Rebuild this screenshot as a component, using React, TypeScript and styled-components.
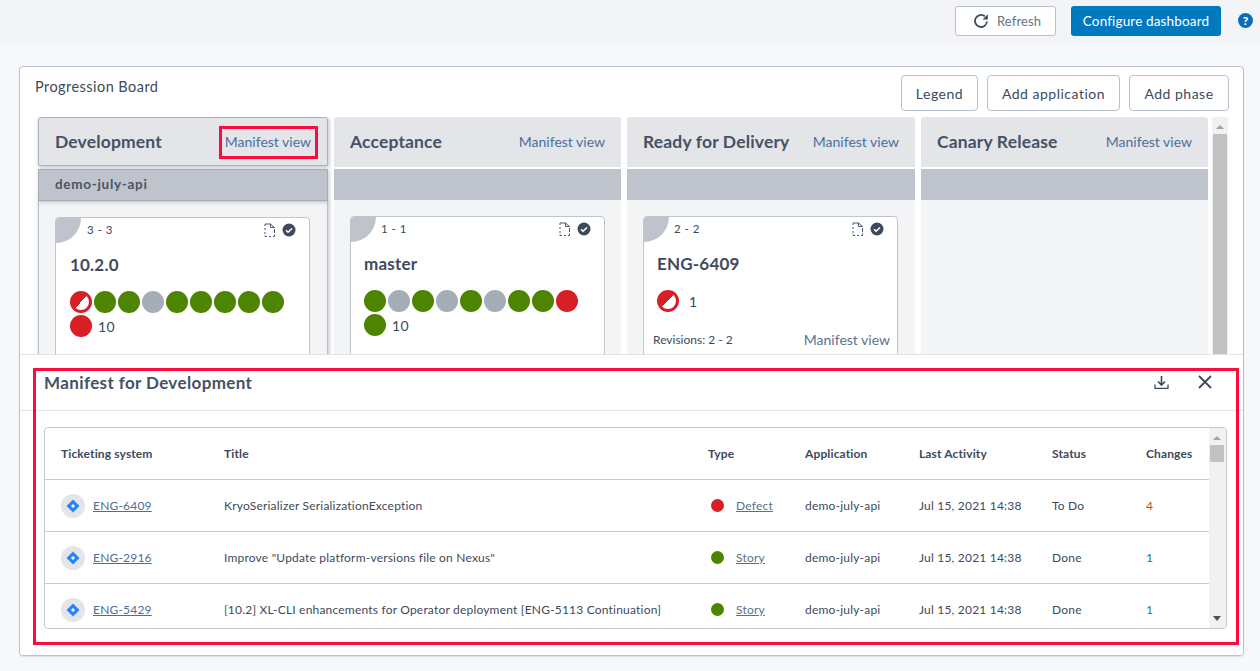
import React from "react";
import styled, { createGlobalStyle } from "styled-components";

const Global = createGlobalStyle`
  html, body { margin: 0; padding: 0; height: 100%; }
  body { background: #f7f8fa; font-family: Lato, "Liberation Sans", sans-serif; color: #3d4a5c; overflow: hidden; }
  * { box-sizing: border-box; }
`;

const Page = styled.div`
  position: relative;
  width: 1260px;
  height: 671px;
  overflow: hidden;
`;
const TopBar = styled.header`
  height: 45px;
  background: #f3f4f8;
  display: flex;
  justify-content: flex-end;
  align-items: flex-start;
  padding: 6px 7px 0 0;
`;
const RefreshButton = styled.button`
  width: 101px;
  height: 30px;
  background: #fff;
  border: 1px solid #b8c0ca;
  border-radius: 3px;
  display: flex;
  align-items: center;
  justify-content: flex-start;
  gap: 8px;
  color: #667385;
  font: 400 13px Lato, sans-serif;
  letter-spacing: 0.1px;
  padding: 0 0 0 17px;
`;
const PrimaryButton = styled.button`
  width: 150px;
  height: 30px;
  margin-left: 15px;
  background: #0079bf;
  border: 0;
  border-radius: 3px;
  color: #fff;
  font: 400 13.5px Lato, sans-serif;
  letter-spacing: 0.15px;
  padding: 0;
`;
const HelpDot = styled.span`
  width: 15px;
  height: 15px;
  margin: 7px 0 0 17px;
  border-radius: 50%;
  background: #0b6db7;
  color: #fff;
  font: 900 12px/15px Lato, sans-serif;
  text-align: center;
`;
const Main = styled.main`
  padding: 21px 16px 0 19px;
`;
const Card = styled.section`
  height: 590px;
  background: #fff;
  border: 1px solid #b8c2cd;
  border-radius: 4px;
  box-shadow: 0 1px 1px rgba(60, 70, 90, 0.12);
  overflow: hidden;
  display: flex;
  flex-direction: column;
`;
const CardHead = styled.div`
  height: 50px;
  display: flex;
  justify-content: space-between;
  align-items: flex-start;
  padding: 8px 14px 0 15px;
`;
const CardTitle = styled.h2`
  margin: 3px 0 0;
  font: 400 14.5px/18px Lato, sans-serif;
  letter-spacing: 0.45px;
  color: #3d4a5c;
`;
const Actions = styled.div`
  display: flex;
  gap: 9px;
`;
const OutlineButton = styled.button<{ $w: number }>`
  width: ${(p) => p.$w}px;
  height: 36px;
  background: #fff;
  border: 1px solid #b8c0ca;
  border-radius: 4px;
  font: 400 14px Lato, sans-serif;
  letter-spacing: 0.5px;
  color: #3d4a5c;
  padding: 0;
`;
const Board = styled.div`
  height: 237px;
  display: flex;
  padding-left: 18px;
  overflow: hidden;
`;
const Columns = styled.div`
  display: grid;
  grid-template-columns: 290px 287px 288px 287px;
  column-gap: 6px;
`;
const Column = styled.div`
  display: flex;
  flex-direction: column;
  min-width: 0;
`;
const ColumnHead = styled.div<{ $active?: boolean }>`
  height: ${(p) => (p.$active ? 49 : 50)}px;
  display: flex;
  align-items: center;
  justify-content: space-between;
  padding: 0 16px ${(p) => (p.$active ? 0 : 1)}px;
  background: #e3e5e9;
  border-radius: 3px 3px 0 0;
  ${(p) => p.$active && `border: 1px solid #a9b2bf; box-shadow: 1px 1px 4px rgba(60,70,90,.35);`}
`;
const PhaseName = styled.span`
  font: 700 17.5px Lato, sans-serif;
  letter-spacing: 0.15px;
  color: #465264;
`;
const ManifestLink = styled.span`
  font: 400 14px Lato, sans-serif;
  color: #4d6f9c;
`;
const Band = styled.div<{ $active?: boolean }>`
  height: ${(p) => (p.$active ? 32 : 31)}px;
  margin-top: ${(p) => (p.$active ? 3 : 2)}px;
  margin-bottom: ${(p) => (p.$active ? -1 : 0)}px;
  background: #bfc4cc;
  display: flex;
  align-items: center;
  padding: 0 0 2px 16px;
  font: 700 13.5px Lato, sans-serif;
  letter-spacing: 0.7px;
  color: #4a5565;
  ${(p) => p.$active && `border: 1px solid #a4acb8; box-shadow: 1px 1px 4px rgba(60,70,90,.3); position: relative;`}
`;
const ColumnBody = styled.div<{ $active?: boolean }>`
  flex: 1;
  background: #f3f4f6;
  padding: ${(p) => (p.$active ? "17px 16px 0" : "16px 16px 0")};
  ${(p) => p.$active && `border: 1px solid #b8c0ca; border-width: 0 1px; box-shadow: 1px 1px 4px rgba(60,70,90,.35);`}
`;
const Release = styled.article<{ $inset?: number }>`
  position: relative;
  width: 255px;
  height: 190px;
  background: #fff;
  border: 1px solid #bfc5cd;
  border-radius: 4px;
  padding: 0 13px 0 ${(p) => p.$inset ?? 13}px;
  overflow: hidden;
`;
const Corner = styled.span`
  position: absolute;
  top: 0;
  left: 0;
  width: 25px;
  height: 25px;
  background: #bfc4cc;
  border-radius: 0 0 25px 0;
`;
const ReleaseTop = styled.div`
  height: 23px;
  display: flex;
  align-items: center;
  padding-left: 17px;
  font: 400 11.5px Lato, sans-serif;
  letter-spacing: 0.5px;
  color: #3d4a5c;
`;
const Range = styled.span`
  flex: 1;
  margin-top: -1px;
`;
const TopIcons = styled.div`
  display: flex;
  align-items: center;
  gap: 7px;
`;
const ReleaseTitle = styled.h3`
  margin: 12px 0 0;
  font: 700 17px/24px Lato, sans-serif;
  letter-spacing: 0.2px;
  color: #3f4b5c;
`;
const Dots = styled.div`
  display: flex;
  flex-wrap: wrap;
  gap: 2px;
  align-items: center;
  margin-top: 14px;
  width: 226px;
`;
const Dot = styled.span<{ $c: string }>`
  width: 22px;
  height: 22px;
  border-radius: 50%;
  background: ${(p) => p.$c};
`;
const HalfDot = styled.span`
  width: 22px;
  height: 22px;
  border-radius: 50%;
  border: 3px solid #d91f26;
  background: linear-gradient(135deg, #d91f26 50%, #fff 50%);
`;
const Count = styled.span<{ $gap: number }>`
  margin-left: ${(p) => p.$gap}px;
  font: 400 14px Lato, sans-serif;
  letter-spacing: 0.3px;
  color: #3d4a5c;
`;
const Footer = styled.div`
  display: flex;
  justify-content: space-between;
  align-items: center;
  margin: 19px -6px 0 -4px;
`;
const Revisions = styled.span`
  font: 400 12px Lato, sans-serif;
  color: #3d4a5c;
`;
const FooterLink = styled.span`
  font: 400 14px Lato, sans-serif;
  color: #5a7191;
`;
const Scrollbar = styled.div`
  position: relative;
  width: 16px;
  margin-left: 4px;
  background: #f1f1f1;
`;
const Thumb = styled.div`
  position: absolute;
  left: 1px;
  right: 1px;
  top: ${(p: { $top: number }) => p.$top}px;
  bottom: 0;
  background: #c1c1c1;
`;
const ArrowUp = styled.span`
  position: absolute;
  top: 8px;
  left: 4px;
  border: 4px solid transparent;
  border-top: 0;
  border-bottom: 4px solid #a3a3a3;
`;
const ArrowDown = styled.span`
  position: absolute;
  bottom: 7px;
  left: 4px;
  border: 4px solid transparent;
  border-bottom: 0;
  border-top: 5px solid #505050;
`;
const Manifest = styled.div`
  flex: 1;
  display: flex;
  flex-direction: column;
  border-top: 1px solid #e1e3e7;
  background: #fff;
  position: relative;
`;
const ManifestHead = styled.div`
  height: 56px;
  display: flex;
  align-items: center;
  padding: 0 31px 0 24px;
  border-bottom: 1px solid #e3e5e8;
`;
const ManifestTitle = styled.h2`
  flex: 1;
  margin: -1px 0 0;
  font: 700 17px Lato, sans-serif;
  letter-spacing: 0.38px;
  color: #465264;
`;
const HeadIcons = styled.div`
  display: flex;
  align-items: center;
  gap: 29px;
  margin-top: -1px;
`;
const TableFrame = styled.div`
  position: relative;
  margin: 16px 16px 0 24px;
  height: 202px;
  border: 1px solid #c2c7ce;
  border-radius: 4px;
  overflow: hidden;
  padding-right: 17px;
`;
const TableScroll = styled.div`
  position: absolute;
  top: 0;
  right: 0;
  bottom: 0;
  width: 17px;
  background: #f1f1f1;
`;
const TableThumb = styled.div`
  position: absolute;
  top: 17px;
  left: 1px;
  width: 14px;
  height: 17px;
  background: #c1c1c1;
`;
const Row = styled.div<{ $head?: boolean }>`
  display: grid;
  grid-template-columns: 179px 484px 97px 114px 133px 94px 1fr;
  align-items: center;
  height: 52px;
  border-bottom: 1px solid #c6cad0;
  font: ${(p) => (p.$head ? "700" : "400")} 12px Lato, sans-serif;
  letter-spacing: ${(p) => (p.$head ? "0.13px" : "0.2px")};
  color: #3d4a5c;
`;
const Cell = styled.div`
  white-space: nowrap;
`;
const TicketCell = styled(Cell)`
  display: flex;
  align-items: center;
  padding-left: 16px;
`;
const Avatar = styled.span`
  width: 24px;
  height: 24px;
  border-radius: 50%;
  background: #e3e5e9;
  display: flex;
  align-items: center;
  justify-content: center;
  margin-right: 8px;
`;
const TicketLink = styled.a`
  color: #4a6d9c;
  text-decoration: underline;
`;
const TypeCell = styled(Cell)`
  display: flex;
  align-items: center;
  padding-left: 3px;
`;
const TypeDot = styled.span<{ $c: string }>`
  width: 13px;
  height: 13px;
  border-radius: 50%;
  background: ${(p) => p.$c};
  margin-right: 12px;
`;
const TypeLink = styled.a`
  color: #5a6f8c;
  text-decoration: underline;
`;
const Changes = styled(Cell)<{ $hot?: boolean }>`
  color: ${(p) => (p.$hot ? "#a85a30" : "#2b6f9e")};
`;
const Marker = styled.div<{ $t: number; $l: number; $w: number; $h: number }>`
  position: absolute;
  top: ${(p) => p.$t}px;
  left: ${(p) => p.$l}px;
  width: ${(p) => p.$w}px;
  height: ${(p) => p.$h}px;
  border: 3px solid #ff0a3c;
  pointer-events: none;
`;

const G = "#4d8400";
const S = "#a5adb8";
const R = "#d91f26";

const FileIcon = () => (
  <svg width="11" height="14" viewBox="0 0 11 14" fill="none" stroke="#4a5870" strokeWidth="1">
    <path d="M1 3V1h5.500M1 5v2M1 9v2M1 12.500v1h2M5 13.500h2M9 13.500h1.500v-2M10.500 10V6M6.500 1v3.500h4L6.500 1" />
  </svg>
);
const CheckBadge = () => (
  <svg width="14" height="14" viewBox="0 0 14 14">
    <circle cx="7" cy="7" r="6.500" fill="#3d4a5c" />
    <path d="M4 7.300l2 1.900 4-3.700" fill="none" stroke="#fff" strokeWidth="1.500" />
  </svg>
);
const JiraMark = () => (
  <svg width="14" height="14" viewBox="0 0 14 14">
    <path d="M7 .5L13.500 7 7 13.500.5 7z" fill="#2684ff" />
    <path d="M7 5L9 7 7 9 5 7z" fill="#fff" />
  </svg>
);

const rows = [
  { id: "ENG-6409", title: "KryoSerializer SerializationException", type: "Defect", c: R, status: "To Do", ch: "4", hot: true },
  { id: "ENG-2916", title: 'Improve "Update platform-versions file on Nexus"', type: "Story", c: G, status: "Done", ch: "1" },
  { id: "ENG-5429", title: "[10.2] XL-CLI enhancements for Operator deployment [ENG-5113 Continuation]", type: "Story", c: G, status: "Done", ch: "1" },
];

type Rel = { range: string; title: string; half?: boolean; dots: string[]; count: string; gap: number; inset?: number; footer?: boolean };

const ReleaseCard = ({ rel }: { rel: Rel }) => (
  <Release $inset={rel.inset}>
    <Corner />
    <ReleaseTop>
      <Range>{rel.range}</Range>
      <TopIcons>
        <FileIcon />
        <CheckBadge />
      </TopIcons>
    </ReleaseTop>
    <ReleaseTitle>{rel.title}</ReleaseTitle>
    <Dots>
      {rel.half && <HalfDot />}
      {rel.dots.map((c, i) => (
        <Dot key={i} $c={c} />
      ))}
      <Count $gap={rel.gap}>{rel.count}</Count>
    </Dots>
    {rel.footer && (
      <Footer>
        <Revisions>Revisions: 2 - 2</Revisions>
        <FooterLink>Manifest view</FooterLink>
      </Footer>
    )}
  </Release>
);

export default function App() {
  return (
    <Page>
      <Global />
      <TopBar>
        <RefreshButton>
          <svg width="16" height="16" viewBox="0 0 16 16" fill="none" stroke="#3d4a5c" strokeWidth="1.800">
            <path d="M14 8.500A6 6 0 1 1 11.800 3.300" />
            <path d="M14.800 1.200v5.300H9.500z" fill="#3d4a5c" stroke="none" />
          </svg>
          Refresh
        </RefreshButton>
        <PrimaryButton>Configure dashboard</PrimaryButton>
        <HelpDot>?</HelpDot>
      </TopBar>
      <Main>
        <Card>
          <CardHead>
            <CardTitle>Progression Board</CardTitle>
            <Actions>
              <OutlineButton $w={77}>Legend</OutlineButton>
              <OutlineButton $w={133}>Add application</OutlineButton>
              <OutlineButton $w={100}>Add phase</OutlineButton>
            </Actions>
          </CardHead>
          <Board>
            <Columns>
              <Column>
                <ColumnHead $active>
                  <PhaseName>Development</PhaseName>
                  <ManifestLink>Manifest view</ManifestLink>
                </ColumnHead>
                <Band $active>demo-july-api</Band>
                <ColumnBody $active>
                  <ReleaseCard rel={{ range: "3 - 3", title: "10.2.0", half: true, dots: [G, G, S, G, G, G, G, G, R], count: "10", gap: 4, inset: 14 }} />
                </ColumnBody>
              </Column>
              <Column>
                <ColumnHead>
                  <PhaseName>Acceptance</PhaseName>
                  <ManifestLink>Manifest view</ManifestLink>
                </ColumnHead>
                <Band />
                <ColumnBody>
                  <ReleaseCard rel={{ range: "1 - 1", title: "master", dots: [G, S, G, S, G, S, G, G, R, G], count: "10", gap: 4 }} />
                </ColumnBody>
              </Column>
              <Column>
                <ColumnHead>
                  <PhaseName>Ready for Delivery</PhaseName>
                  <ManifestLink>Manifest view</ManifestLink>
                </ColumnHead>
                <Band />
                <ColumnBody>
                  <ReleaseCard rel={{ range: "2 - 2", title: "ENG-6409", half: true, dots: [], count: "1", gap: 8, footer: true }} />
                </ColumnBody>
              </Column>
              <Column>
                <ColumnHead>
                  <PhaseName>Canary Release</PhaseName>
                  <ManifestLink>Manifest view</ManifestLink>
                </ColumnHead>
                <Band />
                <ColumnBody />
              </Column>
            </Columns>
            <Scrollbar>
              <ArrowUp />
              <Thumb $top={17} />
            </Scrollbar>
          </Board>
          <Manifest>
            <ManifestHead>
              <ManifestTitle>Manifest for Development</ManifestTitle>
              <HeadIcons>
                <svg width="15" height="15" viewBox="0 0 15 15" fill="none" stroke="#3d4a5c" strokeWidth="1.300">
                  <path d="M7.500 1v8.500M4 6.500l3.500 3.500L11 6.500" strokeWidth="1.600" />
                  <path d="M1 9.500v3.800h13V9.500" />
                </svg>
                <svg width="14" height="14" viewBox="0 0 14 14" fill="none" stroke="#3d4a5c" strokeWidth="1.800">
                  <path d="M1 1l12 12M13 1L1 13" />
                </svg>
              </HeadIcons>
            </ManifestHead>
            <TableFrame>
              <Row $head>
                <TicketCell>Ticketing system</TicketCell>
                <Cell>Title</Cell>
                <Cell>Type</Cell>
                <Cell>Application</Cell>
                <Cell>Last Activity</Cell>
                <Cell>Status</Cell>
                <Cell>Changes</Cell>
              </Row>
              {rows.map((r) => (
                <Row key={r.id}>
                  <TicketCell>
                    <Avatar>
                      <JiraMark />
                    </Avatar>
                    <TicketLink>{r.id}</TicketLink>
                  </TicketCell>
                  <Cell>{r.title}</Cell>
                  <TypeCell>
                    <TypeDot $c={r.c} />
                    <TypeLink>{r.type}</TypeLink>
                  </TypeCell>
                  <Cell>demo-july-api</Cell>
                  <Cell>Jul 15, 2021 14:38</Cell>
                  <Cell>{r.status}</Cell>
                  <Changes $hot={r.hot}>{r.ch}</Changes>
                </Row>
              ))}
              <TableScroll>
                <ArrowUp />
                <TableThumb />
                <ArrowDown />
              </TableScroll>
            </TableFrame>
          </Manifest>
        </Card>
      </Main>
      <Marker $t={126} $l={219} $w={99} $h={33} />
      <Marker $t={368} $l={33} $w={1206} $h={277} />
    </Page>
  );
}
